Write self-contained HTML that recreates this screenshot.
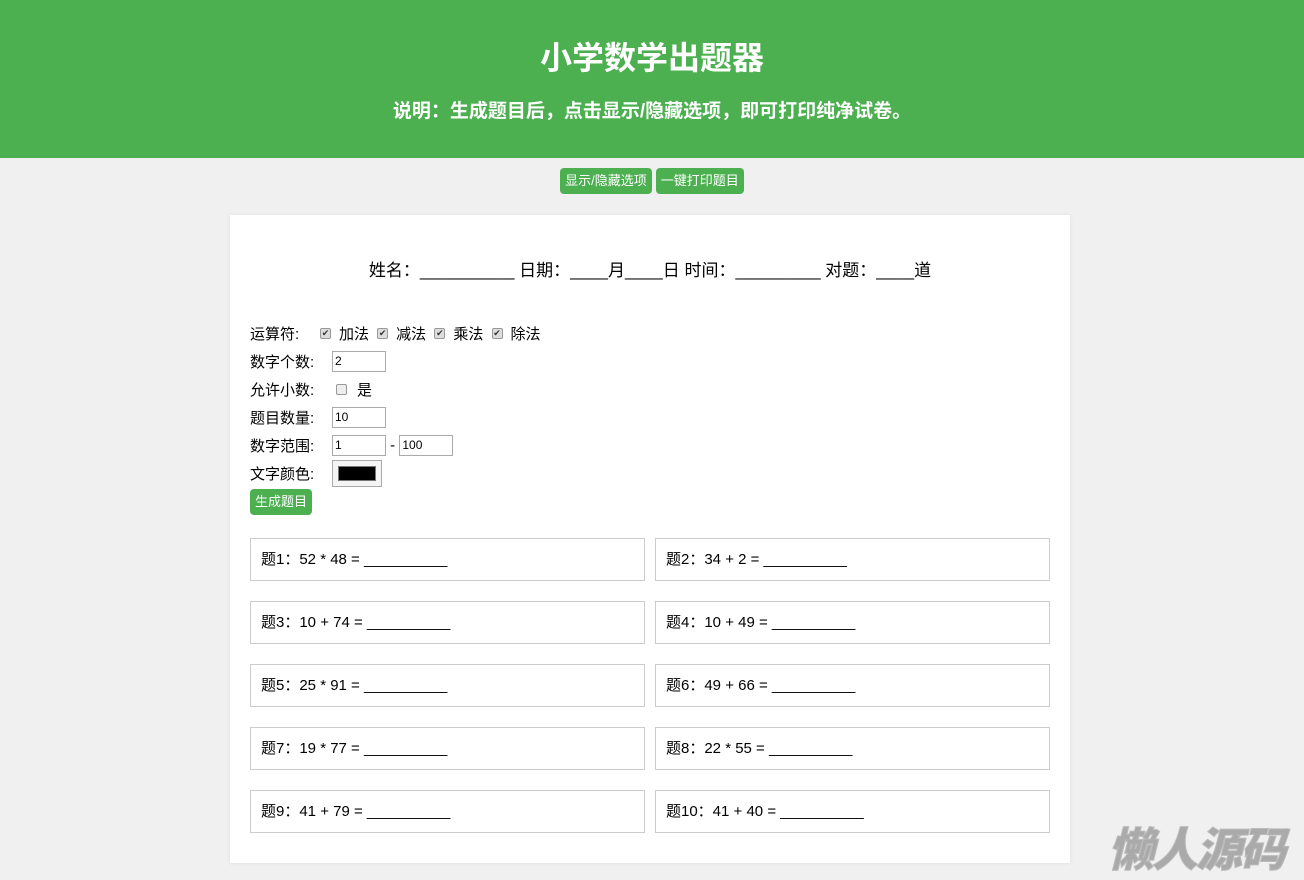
<!DOCTYPE html>
<html><head><meta charset="utf-8"><style>
*{box-sizing:border-box}
body{margin:0;background:#f0f0f0;font-family:"Liberation Sans","Noto Sans CJK SC",sans-serif;color:#000;width:1304px;height:880px;overflow:hidden;position:relative}
.hd{background:#4caf50;color:#fff;height:158px;text-align:center;padding-top:38px}
.hd h1{margin:0;font-size:32px;font-weight:bold;line-height:40px}
.hd p{margin:18px 0 0;font-size:19px;font-weight:bold}
.btns{text-align:center;margin-top:10px;font-size:0}
.b{display:inline-block;background:#4caf50;color:#fff;font-size:13px;line-height:26px;height:26px;padding:0 5px;border-radius:4px;margin:0 2px}
.card{position:absolute;left:230px;top:215px;width:840px;height:648px;background:#fff;box-shadow:0 0 4px rgba(0,0,0,.08);padding:0 20px}
.info{text-align:center;font-size:17px;margin-top:41px;height:24px}
.form{margin-top:39px;font-size:15px}
.row{height:28px;display:flex;align-items:center}
.lab{width:70px}
.cb{width:11px;height:11px;border:1px solid #999;border-radius:2px;background:#ddd;display:inline-block;margin:0 8px 0 0;font-size:9px;line-height:9px;text-align:center;color:#333}
input.t{width:54px;height:21px;border:1px solid #aaa;font-size:12px;padding:0 2px;font-family:inherit}
.q{position:absolute;width:395px;height:43px;border:1px solid #ccc;font-size:15px;line-height:42px;padding-left:10px}
.wm{position:absolute;right:20px;top:814px;font-size:46px;font-weight:900;font-style:italic;color:#aaa;letter-spacing:-2px;-webkit-text-stroke:1px #bbb}
</style></head><body>
<div class="hd"><h1>小学数学出题器</h1><p>说明：生成题目后，点击显示/隐藏选项，即可打印纯净试卷。</p></div>
<div class="btns"><span class="b">显示/隐藏选项</span><span class="b">一键打印题目</span></div>
<div class="card">
<div class="info">姓名：__________ 日期：____月____日 时间：_________ 对题：____道</div>
<div class="form">
<div class="row"><span class="lab">运算符:</span><span class="cb">✔</span>加法&nbsp;<span class="cb" style="margin-left:4px">✔</span>减法&nbsp;<span class="cb" style="margin-left:4px">✔</span>乘法&nbsp;<span class="cb" style="margin-left:4px">✔</span>除法</div>
<div class="row"><span class="lab" style="width:82px">数字个数:</span><input class="t" value="2"></div>
<div class="row"><span class="lab" style="width:82px">允许小数:</span><span class="cb" style="margin-left:4px;margin-right:10px;background:#eee"></span>是</div>
<div class="row"><span class="lab" style="width:82px">题目数量:</span><input class="t" value="10"></div>
<div class="row"><span class="lab" style="width:82px">数字范围:</span><input class="t" value="1">&nbsp;-&nbsp;<input class="t" value="100"></div>
<div class="row"><span class="lab" style="width:82px">文字颜色:</span><span style="display:inline-block;width:50px;height:27px;border:1px solid #aaa;background:#f4f4f4;padding:5px"><span style="display:block;height:100%;background:#000;border:1px solid #777"></span></span></div>
<div class="row" style="height:30px"><span class="b" style="margin:0;font-size:13px">生成题目</span></div>
</div>
<div class="q" style="left:20px;top:323px">题1：52 * 48 = __________</div>
<div class="q" style="left:425px;top:323px">题2：34 + 2 = __________</div>
<div class="q" style="left:20px;top:386px">题3：10 + 74 = __________</div>
<div class="q" style="left:425px;top:386px">题4：10 + 49 = __________</div>
<div class="q" style="left:20px;top:449px">题5：25 * 91 = __________</div>
<div class="q" style="left:425px;top:449px">题6：49 + 66 = __________</div>
<div class="q" style="left:20px;top:512px">题7：19 * 77 = __________</div>
<div class="q" style="left:425px;top:512px">题8：22 * 55 = __________</div>
<div class="q" style="left:20px;top:575px">题9：41 + 79 = __________</div>
<div class="q" style="left:425px;top:575px">题10：41 + 40 = __________</div>
</div>
<div class="wm">懒人源码</div>
</body></html>
